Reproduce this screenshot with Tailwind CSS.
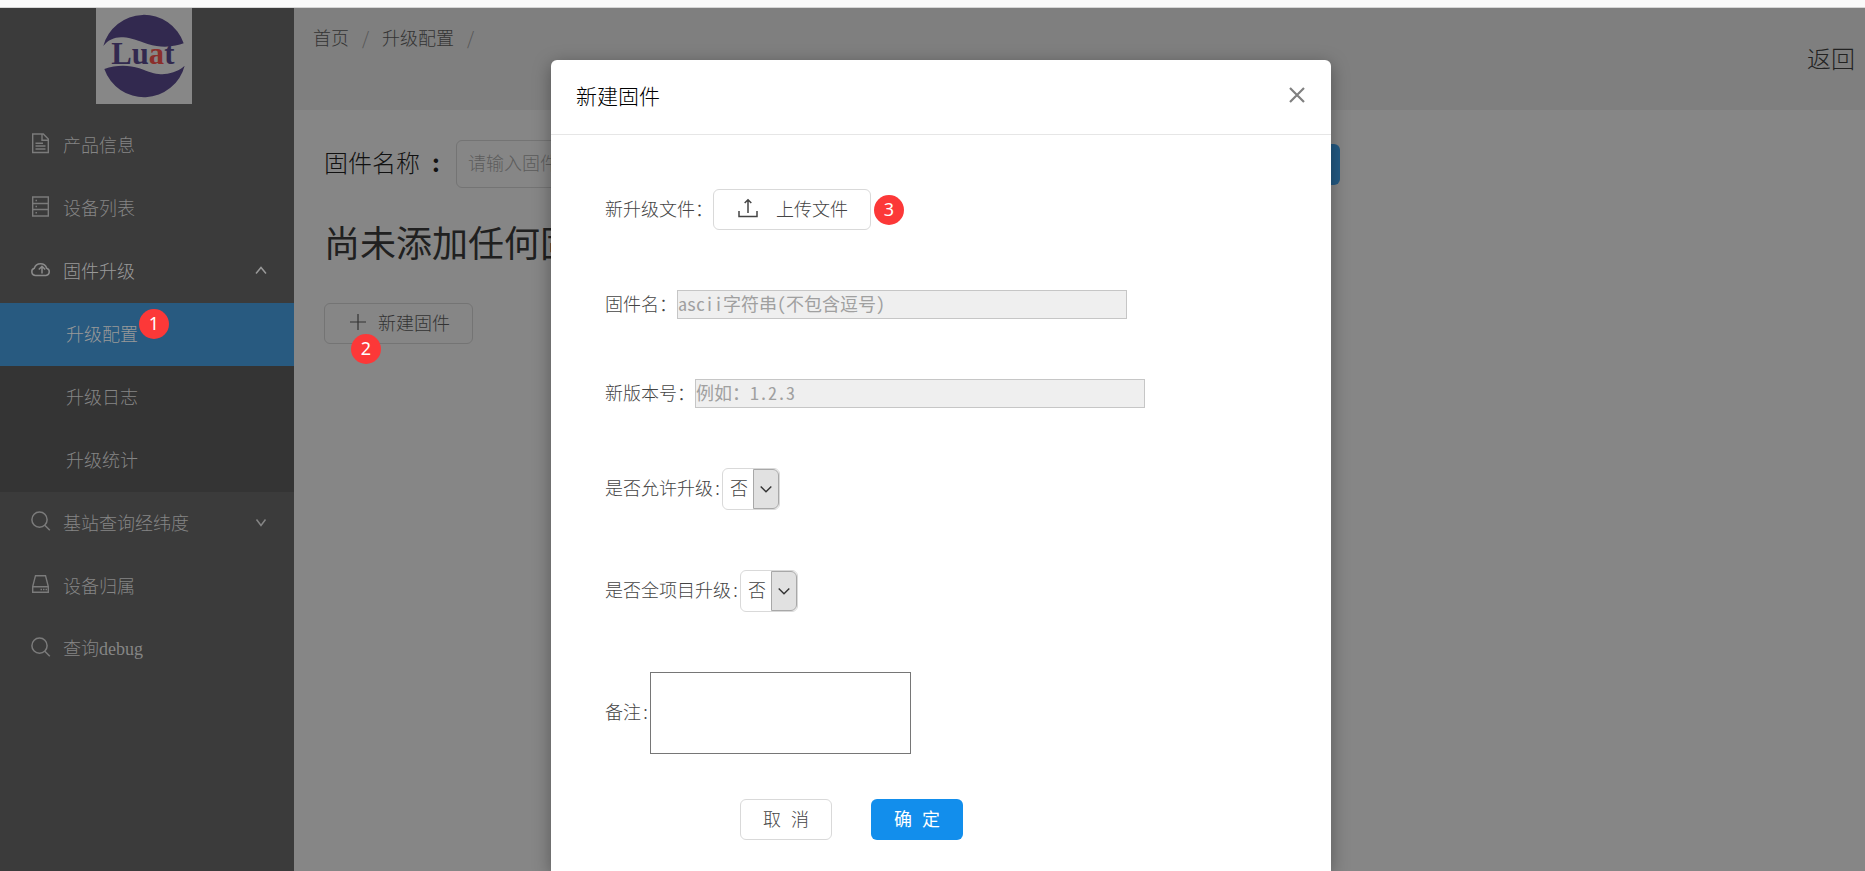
<!DOCTYPE html>
<html lang="zh-CN">
<head>
<meta charset="utf-8">
<title>升级配置</title>
<script src="https://cdn.jsdelivr.net/npm/@tailwindcss/browser@4"></script>
</head>
<body class="relative flex min-h-screen flex-col overflow-hidden bg-[#868686] font-['Noto_Sans_CJK_SC',sans-serif] text-lg font-light text-[#333]">
  <div class="h-2 border-b border-[#d6d6d6] bg-[#fafafa]"></div>

  <div class="flex flex-1">
    <!-- Sidebar -->
    <aside class="w-[294px] shrink-0 bg-[#3b3b3b] text-[#858585]">
      <svg class="mb-2.5 ml-24 block size-24 bg-[#878787]" viewBox="0 0 288 288" role="img" aria-label="Luat">
        <path fill="#32294f" d="M22 114A126 126 0 0 1 263 106C240 115 200 122 155 108C125 98 105 90 82 88C58 86 38 94 22 114Z"/>
        <path fill="#32294f" d="M25 183C60 170 98 170 130 181C165 194 180 201 205 198C232 195 250 187 266 173A126 126 0 0 1 25 183Z"/>
        <text x="46" y="168" font-family="Liberation Serif" font-weight="700" font-size="92" fill="#32294f">Lu<tspan fill="#8b2f2c">a</tspan>t</text>
      </svg>
      <nav>
        <a href="#" class="flex h-[63px] items-center pb-1 pl-[30px]">
          <svg class="mr-3 size-[21px] text-[#7b7b7b]" viewBox="0 0 21 21" fill="none" stroke="currentColor" stroke-width="1.4"><path d="M2.7 1h10.6l5 5v13.5H2.7zM12 1v6.3h6M5.5 10.2h7.5M5.5 13h10M5.5 16h10"/></svg>
          <span>产品信息</span>
        </a>
        <a href="#" class="flex h-[63px] items-center pb-1 pl-[30px]">
          <svg class="mr-3 size-[21px] text-[#7b7b7b]" viewBox="0 0 21 21" fill="none" stroke="currentColor" stroke-width="1.4"><path d="M2.7 1h15.6v19H2.7zM2.7 7.5h15.6M2.7 13.5h15.6M5.5 4.5h1.5M5.5 10.5h1.5M5.5 16.7h1.5"/></svg>
          <span>设备列表</span>
        </a>
        <a href="#" class="flex h-[63px] items-center pr-[27px] pb-1 pl-[30px] text-[#999]">
          <svg class="mr-3 size-[21px] text-[#8a8a8a]" viewBox="0 0 21 21" fill="none" stroke="currentColor" stroke-width="1.5"><path d="M5.5 16.5h10.5a3.7 3.7 0 0 0 .7-7.2A6.5 6.5 0 0 0 4.3 9.3 3.7 3.7 0 0 0 5.500 16.5zM12 14.5V7.5M8.8 10.5L12 7.3l3.2 3.2"/></svg>
          <span class="flex-1">固件升级</span>
          <svg class="size-3" viewBox="0 0 12 12" fill="none" stroke="currentColor" stroke-width="1.5"><path d="M1 9.5l5-6 5 6"/></svg>
        </a>
        <div class="bg-[#343434]">
          <a href="#" class="relative flex h-[63px] items-center bg-[#285a80] pb-1 pl-[66px] text-[#999]">升级配置
            <span class="absolute top-[6px] left-[139px] flex size-[30px] items-center justify-center rounded-full bg-[#fc3838] pb-0.5 font-['Noto_Sans'] font-normal text-white">1</span>
          </a>
          <a href="#" class="flex h-[63px] items-center pb-1 pl-[66px]">升级日志</a>
          <a href="#" class="flex h-[63px] items-center pb-1 pl-[66px]">升级统计</a>
        </div>
        <a href="#" class="flex h-[63px] items-center pr-[27px] pb-1 pl-[30px]">
          <svg class="mr-3 size-[21px] text-[#7b7b7b]" viewBox="0 0 21 21" fill="none" stroke="currentColor" stroke-width="1.5"><circle cx="9.5" cy="8.7" r="7.6"/><path d="M14.8 14.3l5 5"/></svg>
          <span class="flex-1">基站查询经纬度</span>
          <svg class="size-3" viewBox="0 0 12 12" fill="none" stroke="currentColor" stroke-width="1.5"><path d="M1.5 3.5l4.5 6 4.5-6"/></svg>
        </a>
        <a href="#" class="flex h-[63px] items-center pb-1 pl-[30px]">
          <svg class="mr-3 size-[21px] text-[#7b7b7b]" viewBox="0 0 21 21" fill="none" stroke="currentColor" stroke-width="1.4"><path d="M5.5 1.7h10l2.8 11v5.5H2.7v-5.5zM2.7 12.7h15.6M10.5 15.5h1.5M13 15.5h1.5M15.5 15.5h1.5"/></svg>
          <span>设备归属</span>
        </a>
        <a href="#" class="flex h-[63px] items-center pb-1 pl-[30px]">
          <svg class="mr-3 size-[21px] text-[#7b7b7b]" viewBox="0 0 21 21" fill="none" stroke="currentColor" stroke-width="1.5"><circle cx="9.5" cy="8.7" r="7.6"/><path d="M14.8 14.3l5 5"/></svg>
          <span>查询<span class="font-['Liberation_Serif',serif]">debug</span></span>
        </a>
      </nav>
    </aside>

    <!-- Page -->
    <main class="min-w-0 flex-1">
      <header class="flex h-[102px] justify-between bg-[#7f7f7f] pr-2.5 pb-0.5 pl-[19px]">
        <nav class="flex gap-3 pt-[15px]" aria-label="面包屑">
          <a href="#">首页</a><span class="w-[9px] text-center text-[#555]">/</span><a href="#">升级配置</a><span class="w-[9px] text-center text-[#555]">/</span>
        </nav>
        <a href="#" class="self-center text-2xl text-[#222]">返回</a>
      </header>
      <section class="px-[30px] pt-[30px]">
        <div class="flex w-[1016px] items-center">
          <label for="q" class="flex w-[132px] gap-3 pb-1 text-2xl text-[#111]">固件名称 <span class="font-bold">:</span></label>
          <input id="q" placeholder="请输入固件名称" class="h-12 w-[360px] rounded-md border border-[#747474] px-[11px] pb-1 placeholder:text-[#5c5c5c]">
          <button class="ml-auto h-[41px] w-[92px] rounded-md bg-[#235a83] text-[#868686]">查 询</button>
        </div>
        <h1 class="mt-[25px] text-4xl leading-14 font-normal text-[#202020]">尚未添加任何固件</h1>
        <button class="relative mt-[34px] flex h-[41px] items-center rounded-md border border-[#747474] pr-[22px] pb-1 pl-[25px]">
          <svg class="mr-3 size-4" viewBox="0 0 16 16" stroke="currentColor" stroke-width="1.2"><path d="M8 0v16M0 8h16"/></svg>新建固件
          <span class="absolute top-[30px] left-[26px] flex size-[30px] items-center justify-center rounded-full bg-[#fc3838] pb-0.5 font-['Noto_Sans'] font-normal text-white">2</span>
        </button>
      </section>
    </main>
  </div>

  <!-- Dialog -->
  <div class="absolute inset-x-0 top-[60px] bottom-0 flex justify-center pl-[17px]">
    <div role="dialog" aria-labelledby="dialog-title" class="w-[780px] rounded-t-md bg-white text-[#444] shadow-[0_4px_18px_rgba(0,0,0,0.35)]">
      <div class="flex h-[75px] items-center justify-between border-b border-[#e6e6e6] px-[25px] pb-1">
        <h2 id="dialog-title" class="text-[21px] text-[#000]">新建固件</h2>
        <button aria-label="关闭" class="text-[#808080]"><svg class="size-[18px]" viewBox="0 0 18 18" fill="none" stroke="currentColor" stroke-width="2.2"><path d="M2 2l14 14M16 2L2 16"/></svg></button>
      </div>
      <form class="flex flex-col gap-15 pt-[54px] pl-[54px]">
        <div class="flex items-center">
          <label for="file" class="pb-1">新升级文件：</label>
          <button id="file" type="button" class="flex h-[41px] items-center rounded-md border border-[#d9d9d9] pr-[22px] pb-1 pl-6">
            <svg class="mr-[18px] size-5" viewBox="0 0 20 20" fill="none" stroke="currentColor" stroke-width="1.5"><path d="M1 13v5.5h18V13M10 15V2M6.7 5L10 1.7 13.3 5"/></svg>上传文件
          </button>
          <span class="ml-[3px] flex size-[30px] items-center justify-center rounded-full bg-[#fc3838] pb-0.5 font-['Noto_Sans'] font-normal text-white">3</span>
        </div>
        <div class="flex h-[29px] items-center">
          <label for="name" class="pb-1">固件名：</label>
          <input id="name" placeholder="ascii字符串(不包含逗号)" class="h-[29px] w-[450px] border border-[#c6c6c6] bg-[#efefef] pb-1 font-['Noto_Sans_Mono_CJK_SC',monospace] placeholder:text-[#a0a0a0]">
        </div>
        <div class="flex h-[29px] items-center">
          <label for="version" class="pb-1">新版本号：</label>
          <input id="version" placeholder="例如：1.2.3" class="h-[29px] w-[450px] border border-[#c6c6c6] bg-[#efefef] pb-1 font-['Noto_Sans_Mono_CJK_SC',monospace] placeholder:text-[#a0a0a0]">
        </div>
        <div class="flex items-center">
          <label for="allow" class="flex pb-1">是否允许升级<span class="w-[9px] text-center">:</span></label>
          <div class="relative">
            <select id="allow" class="block h-[42px] w-[58px] appearance-none rounded-md border border-[#d9d9d9] pb-1 pl-[7px]"><option>否</option><option>是</option></select>
            <span class="pointer-events-none absolute inset-y-px right-px flex w-[26px] items-center justify-center rounded-r-md border border-[#a8a8a8] bg-[#e1e1e1] text-[#333]"><svg class="size-3" viewBox="0 0 12 12" fill="none" stroke="currentColor" stroke-width="1.4"><path d="M.7 3.5L6 8.7l5.3-5.2"/></svg></span>
          </div>
        </div>
        <div class="flex items-center">
          <label for="all" class="flex pb-1">是否全项目升级<span class="w-[9px] text-center">:</span></label>
          <div class="relative">
            <select id="all" class="block h-[42px] w-[58px] appearance-none rounded-md border border-[#d9d9d9] pb-1 pl-[7px]"><option>否</option><option>是</option></select>
            <span class="pointer-events-none absolute inset-y-px right-px flex w-[26px] items-center justify-center rounded-r-md border border-[#a8a8a8] bg-[#e1e1e1] text-[#333]"><svg class="size-3" viewBox="0 0 12 12" fill="none" stroke="currentColor" stroke-width="1.4"><path d="M.7 3.5L6 8.7l5.3-5.2"/></svg></span>
          </div>
        </div>
        <div class="flex items-center">
          <label for="remark" class="flex pb-1">备注<span class="w-[9px] text-center">:</span></label>
          <textarea id="remark" class="h-[82px] w-[261px] resize-none border border-[#767676]"></textarea>
        </div>
        <div class="-mt-[15px] flex gap-[39px] pl-[135px]">
          <button type="button" class="flex h-[41px] w-[92px] items-center justify-center gap-2.5 rounded-md border border-[#d9d9d9] pb-1"><span>取</span> <span>消</span></button>
          <button type="submit" class="flex h-[41px] w-[92px] items-center justify-center gap-2.5 rounded-md bg-[#128eec] pb-1 font-normal text-white"><span>确</span> <span>定</span></button>
        </div>
      </form>
    </div>
  </div>
</body>
</html>
